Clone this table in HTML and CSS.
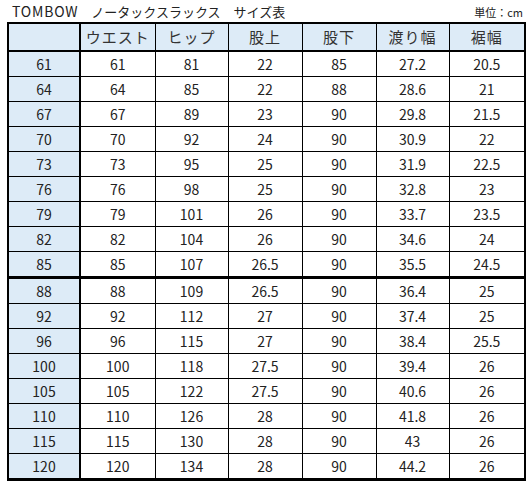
FILE: index.html
```html
<!DOCTYPE html>
<html lang="ja">
<head>
<meta charset="utf-8">
<title>TOMBOW サイズ表</title>
<link rel="stylesheet" href="styles.css">
</head>
<body>
<div class="sheet">
  <div class="titlebar">
    <span class="title"><span class="brand">TOMBOW</span>　ノータックスラックス　サイズ表</span>
    <span class="unit">単位：cm</span>
  </div>
  <table class="size">
    <colgroup>
      <col class="c1"><col class="c2"><col class="c3"><col class="c4"><col class="c5"><col class="c6"><col class="c7">
    </colgroup>
    <thead>
      <tr><th class="key"></th><th>ウエスト</th><th>ヒップ</th><th>股上</th><th>股下</th><th>渡り幅</th><th>裾幅</th></tr>
    </thead>
    <tbody>
      <tr><th class="key">61</th><td>61</td><td>81</td><td>22</td><td>85</td><td>27.2</td><td>20.5</td></tr>
      <tr><th class="key">64</th><td>64</td><td>85</td><td>22</td><td>88</td><td>28.6</td><td>21</td></tr>
      <tr><th class="key">67</th><td>67</td><td>89</td><td>23</td><td>90</td><td>29.8</td><td>21.5</td></tr>
      <tr><th class="key">70</th><td>70</td><td>92</td><td>24</td><td>90</td><td>30.9</td><td>22</td></tr>
      <tr><th class="key">73</th><td>73</td><td>95</td><td>25</td><td>90</td><td>31.9</td><td>22.5</td></tr>
      <tr><th class="key">76</th><td>76</td><td>98</td><td>25</td><td>90</td><td>32.8</td><td>23</td></tr>
      <tr><th class="key">79</th><td>79</td><td>101</td><td>26</td><td>90</td><td>33.7</td><td>23.5</td></tr>
      <tr><th class="key">82</th><td>82</td><td>104</td><td>26</td><td>90</td><td>34.6</td><td>24</td></tr>
      <tr class="split"><th class="key">85</th><td>85</td><td>107</td><td>26.5</td><td>90</td><td>35.5</td><td>24.5</td></tr>
      <tr><th class="key">88</th><td>88</td><td>109</td><td>26.5</td><td>90</td><td>36.4</td><td>25</td></tr>
      <tr><th class="key">92</th><td>92</td><td>112</td><td>27</td><td>90</td><td>37.4</td><td>25</td></tr>
      <tr><th class="key">96</th><td>96</td><td>115</td><td>27</td><td>90</td><td>38.4</td><td>25.5</td></tr>
      <tr><th class="key">100</th><td>100</td><td>118</td><td>27.5</td><td>90</td><td>39.4</td><td>26</td></tr>
      <tr><th class="key">105</th><td>105</td><td>122</td><td>27.5</td><td>90</td><td>40.6</td><td>26</td></tr>
      <tr><th class="key">110</th><td>110</td><td>126</td><td>28</td><td>90</td><td>41.8</td><td>26</td></tr>
      <tr><th class="key">115</th><td>115</td><td>130</td><td>28</td><td>90</td><td>43</td><td>26</td></tr>
      <tr class="last"><th class="key">120</th><td>120</td><td>134</td><td>28</td><td>90</td><td>44.2</td><td>26</td></tr>
    </tbody>
  </table>
</div>
</body>
</html>
```

FILE: styles.css
```css
html, body {
  margin: 0;
  padding: 0;
  background: #ffffff;
}

body {
  font-family: "Noto Sans CJK JP", "Noto Sans", sans-serif;
  color: #222222;
}

.sheet {
  padding: 0 0 0 7px;
  width: 517px;
}

.titlebar {
  display: flex;
  justify-content: space-between;
  align-items: flex-end;
  height: 22px;
  padding: 0 1px 0 5px;
}

.title {
  font-size: 13px;
  line-height: 17px;
  padding-bottom: 2px;
}

.brand {
  font-size: 14px;
  letter-spacing: 0.8px;
}

.unit {
  font-size: 11px;
  line-height: 14px;
  padding-bottom: 3px;
}

.size {
  border-collapse: collapse;
  table-layout: fixed;
  width: 517px;
  border: 2px solid #000;
}

.c1 { width: 72px; }
.c2 { width: 75px; }
.c3 { width: 73px; }
.c4 { width: 74px; }
.c5 { width: 74px; }
.c6 { width: 73px; }
.c7 { width: 76px; }

.size th,
.size td {
  border: 1px solid #000;
  height: 24px;
  padding: 0;
  text-align: center;
  vertical-align: middle;
  font-size: 14px;
  font-weight: normal;
  line-height: 18px;
}

.size thead th {
  background: #ddebf7;
  border-bottom: 2px solid #000;
  height: 26px;
  font-size: 15px;
  letter-spacing: 1px;
  color: #333;
}

.size th.key {
  background: #ddebf7;
  border-right: 2px solid #000;
}

.size tr.split th,
.size tr.split td {
  border-bottom: 3px solid #000;
}

.size tr.last th,
.size tr.last td {
  border-bottom: 3px solid #000;
}
```
